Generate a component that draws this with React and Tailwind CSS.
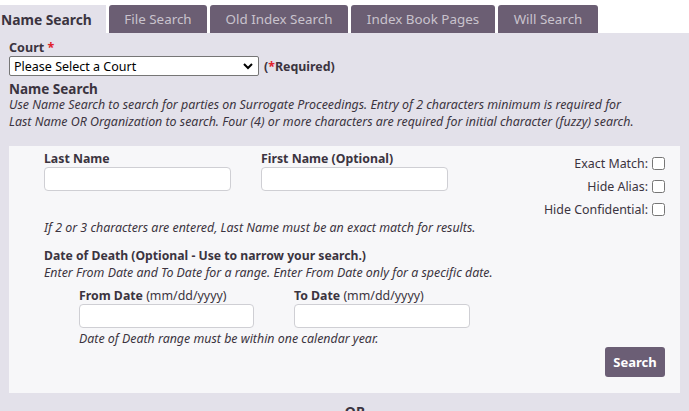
import React from "react";

const font = { fontFamily: '"Noto Sans", "Open Sans", sans-serif' };

function Tab({ children, w }) {
  return (
    <div
      className={`h-[28px] rounded-t-[3px] bg-[#6b5e73] text-[#c9c3cd] text-[13.4px] flex items-center justify-center ${w}`}
    >
      {children}
    </div>
  );
}

function Check({ label }) {
  return (
    <label className="flex items-center justify-end gap-[4px] text-[12.4px] text-[#3b3440] h-[23px]">
      <span>{label}</span>
      <input type="checkbox" className="w-[13px] h-[13px] m-0" />
    </label>
  );
}

export default function App() {
  return (
    <div className="w-[689px] h-[411px] overflow-hidden bg-white text-[#3b3440] leading-[17px]" style={font}>
      <div className="flex items-end gap-[3px] h-[33px]">
        <div className="w-[106px] h-[28px] bg-[#e3e1ea] font-bold text-[13.8px] flex items-center pl-[1px] text-[#3b3440]">
          Name Search
        </div>
        <Tab w="w-[98px]">File Search</Tab>
        <Tab w="w-[138px]">Old Index Search</Tab>
        <Tab w="w-[144px]">Index Book Pages</Tab>
        <Tab w="w-[100px]">Will Search</Tab>
      </div>
      <div className="bg-[#e3e1ea] h-[378px] px-[9px] pt-[6px]">
        <div className="font-bold text-[12.6px] h-[17px]">
          Court <span className="text-[#e0202a]">*</span>
        </div>
        <div className="flex items-center gap-[5px]">
          <div className="relative w-[250px] h-[20px]">
            <select className="appearance-none w-full h-full bg-white border border-[#767676] rounded-[2px] pl-[4px] text-[12.5px] text-black">
              <option>Please Select a Court</option>
            </select>
            <svg className="absolute right-[6px] top-[6px] pointer-events-none" width="10" height="8" viewBox="0 0 10 8">
              <path d="M1 2 L5 6 L9 2" fill="none" stroke="#000" strokeWidth="2" />
            </svg>
          </div>
          <div className="font-bold text-[12.4px]">
            (<span className="text-[#e0202a]">*</span>Required)
          </div>
        </div>
        <div className="font-bold text-[13.5px] mt-[5px] h-[16px] leading-[16px]">Name Search</div>
        <p className="italic text-[12.4px] leading-[17px] w-[660px] -mt-[1px]">
          Use Name Search to search for parties on Surrogate Proceedings. Entry of 2 characters minimum is required for
          <br />
          Last Name OR Organization to search. Four (4) or more characters are required for initial character (fuzzy) search.
        </p>
        <div className="bg-[#f7f7f9] w-[671px] h-[247px] mt-[16px] pl-[35px] pr-[15px] pt-[4px]">
          <div className="flex justify-between">
            <div className="flex gap-[30px]">
              <div>
                <div className="font-bold text-[12.3px] h-[17px]">Last Name</div>
                <input className="w-[187px] h-[24px] bg-white border border-[#cfcfd4] rounded-[4px]" />
              </div>
              <div>
                <div className="font-bold text-[12.3px] h-[17px]">First Name (Optional)</div>
                <input className="w-[187px] h-[24px] bg-white border border-[#cfcfd4] rounded-[4px]" />
              </div>
            </div>
            <div className="flex flex-col pt-[2px]">
              <Check label="Exact Match:" />
              <Check label="Hide Alias:" />
              <Check label="Hide Confidential:" />
            </div>
          </div>
          <p className="italic text-[12.4px] -mt-[2px]">
            If 2 or 3 characters are entered, Last Name must be an exact match for results.
          </p>
          <div className="font-bold text-[12.2px] mt-[11px]">Date of Death (Optional - Use to narrow your search.)</div>
          <p className="italic text-[12.4px]">Enter From Date and To Date for a range. Enter From Date only for a specific date.</p>
          <div className="pl-[35px] mt-[6px]">
            <div className="flex gap-[40px]">
              <div>
                <div className="text-[12.4px] h-[17px]">
                  <span className="font-bold text-[12.3px]">From Date</span> (mm/dd/yyyy)
                </div>
                <input className="w-[175px] h-[24px] bg-white border border-[#cfcfd4] rounded-[4px]" />
              </div>
              <div>
                <div className="text-[12.4px] h-[17px]">
                  <span className="font-bold text-[12.3px]">To Date</span> (mm/dd/yyyy)
                </div>
                <input className="w-[176px] h-[24px] bg-white border border-[#cfcfd4] rounded-[4px]" />
              </div>
            </div>
            <p className="italic text-[12.4px] mt-[2px]">Date of Death range must be within one calendar year.</p>
          </div>
          <div className="flex justify-end">
            <button className="w-[60px] h-[30px] bg-[#6b5e75] text-white font-bold text-[13px] rounded-[3px]">
              Search
            </button>
          </div>
        </div>
        <div className="text-center font-bold text-[14px] mt-[10px] pl-[21px]">OR</div>
      </div>
    </div>
  );
}
